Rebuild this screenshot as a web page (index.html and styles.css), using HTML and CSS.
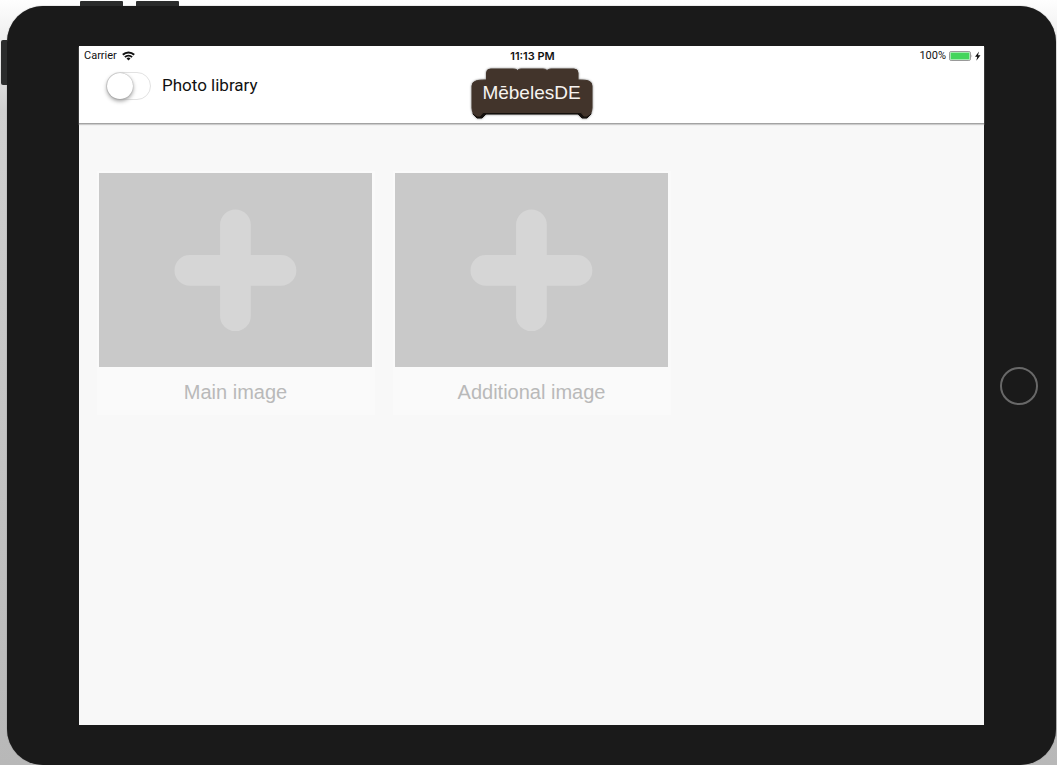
FILE: index.html
```html
<!DOCTYPE html>
<html lang="en">
<head>
<meta charset="utf-8">
<meta name="viewport" content="width=device-width, initial-scale=1">
<title>MēbelesDE</title>
<link rel="stylesheet" href="styles.css">
</head>
<body>
<div class="device">
  <span class="key key-volume-up"></span>
  <span class="key key-volume-down"></span>
  <span class="key key-power"></span>
  <div class="screen">
    <header class="header">
      <div class="status">
        <div class="status-left">
          <span>Carrier</span>
          <svg width="13" height="10" viewBox="0 0 13 10" fill="none" stroke="#111" stroke-width="2" aria-hidden="true">
            <path d="M.8 3.7a8.2 8.2 0 0 1 11.4 0"/>
            <path d="M2.9 6.1a5.2 5.2 0 0 1 7.2 0"/>
            <path d="M6.5 9.6 4.5 7.5a2.900 2.900 0 0 1 4 0Z" fill="#111" stroke="none"/>
          </svg>
        </div>
        <time class="status-time">11:13 PM</time>
        <div class="status-right">
          <span>100%</span>
          <svg width="32" height="10" viewBox="0 0 32 10" aria-hidden="true">
            <rect x=".5" y=".5" width="21" height="9" rx="1.6" fill="#fff" stroke="#999"/>
            <rect x="1.500" y="1.500" width="19" height="7" fill="#43d55b"/>
            <path d="M22.6 3.4q1.2 1.6 0 3.2Z" fill="#888"/>
            <path d="M30 .5 26 5.700h2.300l-1 4 4.200-5.500h-2.500Z" fill="#111"/>
          </svg>
        </div>
      </div>
      <div class="toolbar">
        <label class="toggle">
          <input class="toggle-input" type="checkbox" role="switch">
          <span class="toggle-text">Photo library</span>
        </label>
        <a class="logo" href="#">
          <svg class="logo-sofa" width="126" height="54" viewBox="0 0 126 54" aria-hidden="true">
            <path d="M5 44h116l1 4-4 4h-5l-4-4H17l-4 4H8l-4-4Z" fill="#15100d" stroke="#15100d" stroke-linejoin="round"/>
            <path d="M7 15q2-1 10.500-1V7q0-4 4-4h23q3 0 4 1.500Q49.500 3 52 3h22q3 0 4 1.500Q79.500 3 82 3h23q4 0 4 4v7q8.500 0 10.500 1 3.500 1 3.500 5v22q0 4-2 6l-3 2h-3l-3-3.500H14L11 50H8l-3-2q-2-2-2-6V20q0-4 4-5Z" fill="#42342b" stroke="#42342b"/>
          </svg>
          <span class="logo-text">MēbelesDE</span>
        </a>
      </div>
    </header>
    <main class="gallery">
      <button class="card" type="button">
        <span class="card-image">
          <svg class="plus" viewBox="0 0 124 124" aria-hidden="true"><path d="M62 16v92M16 62h92"/></svg>
        </span>
        <span class="card-label">Main image</span>
      </button>
      <button class="card" type="button">
        <span class="card-image">
          <svg class="plus" viewBox="0 0 124 124" aria-hidden="true"><path d="M62 16v92M16 62h92"/></svg>
        </span>
        <span class="card-label">Additional image</span>
      </button>
    </main>
  </div>
  <div class="bezel">
    <button class="home" type="button" aria-label="Home"></button>
  </div>
</div>
</body>
</html>
```
FILE: styles.css
```css
* {
  box-sizing: border-box;
}

body {
  margin: 0;
  height: 100vh;
  padding: 6px 1px 0 7px;
  overflow: hidden;
  background: linear-gradient(#fefefe, #f2f2f2 30px, #d0d0d0 110px, #b8b8b8);
  font-family: Roboto, Inter, "Liberation Sans", sans-serif;
  color: #111;
}

button {
  padding: 0;
  border: 0;
  background: none;
  font: inherit;
  cursor: pointer;
}

.device {
  position: relative;
  display: grid;
  grid-template-columns: 1fr 72px;
  height: 100%;
  padding: 40px 0 40px 72px;
  border-radius: 36px;
  background: #1a1a1a;
  box-shadow: 0 0 1px #555;
}

.key {
  position: absolute;
  background: #2b2c2c;
}

.key-volume-up,
.key-volume-down {
  top: -5px;
  width: 43px;
  height: 5px;
  border-radius: 1px 1px 0 0;
}

.key-volume-up {
  left: 73px;
}

.key-volume-down {
  left: 129px;
}

.key-power {
  top: 34px;
  left: -6px;
  width: 6px;
  height: 45px;
  border-radius: 2px 0 0 2px;
}

.screen {
  display: flex;
  flex-direction: column;
  background: #f8f8f8;
}

.header {
  border-bottom: 1px solid #a3a3a3;
  background: #fff;
  box-shadow: 0 1px 1px #ccc;
}

.status {
  display: grid;
  grid-template-columns: 1fr auto 1fr;
  align-items: center;
  height: 19px;
  padding: 0 3px 0 5px;
  font-size: 11px;
}

.status-left,
.status-right {
  display: flex;
  align-items: center;
  gap: 5px;
}

.status-right {
  justify-content: flex-end;
  gap: 3px;
}

.status-time {
  font-family: Inter, Roboto, sans-serif;
  font-weight: 600;
}

.toolbar {
  display: grid;
  grid-template-columns: 1fr auto 1fr;
  height: 58px;
  padding: 1px 27px 0;
}

.toggle {
  display: flex;
  align-items: center;
  align-self: start;
  gap: 11px;
  height: 40px;
  font-size: 17px;
}

.toggle-text {
  padding-bottom: 3px;
}

.toggle-input {
  appearance: none;
  width: 45px;
  height: 28px;
  margin: 0;
  border: 1px solid #e2e2e2;
  border-radius: 14px;
  background: #fff;
  cursor: pointer;
}

.toggle-input::before {
  content: "";
  display: block;
  width: 26px;
  height: 26px;
  border-radius: 50%;
  background: #fff;
  box-shadow: 0 0 1px #888, 0 2px 4px #999;
}

.toggle-input:checked {
  background: #43d55b;
}

.toggle-input:checked::before {
  margin-left: 17px;
}

.logo {
  display: grid;
  place-items: center;
  align-self: start;
  color: #f6f3f0;
  font-family: "Liberation Sans", Arial, sans-serif;
  font-size: 19px;
  text-decoration: none;
}

.logo > * {
  grid-area: 1 / 1;
}

.logo-sofa {
  filter: drop-shadow(0 0 1px #0008);
}

.logo-text {
  z-index: 1;
}

.gallery {
  display: grid;
  grid-template-columns: repeat(3, 1fr);
  align-items: start;
  gap: 18px;
  padding: 47px 17px 0 18px;
}

.card {
  display: flex;
  flex-direction: column;
  padding: 2px 3px 0 2px;
  background: #fafafa;
  color: #b9b9b9;
}

.card-image {
  display: grid;
  place-items: center;
  width: 100%;
  aspect-ratio: 273 / 194;
  background: #c9c9c9;
}

.plus {
  width: 45%;
  fill: none;
  stroke: #d6d6d6;
  stroke-width: 31;
  stroke-linecap: round;
}

.card-label {
  width: 100%;
  padding-top: 3px;
  font-family: "Liberation Sans", Arial, sans-serif;
  font-size: 20px;
  line-height: 45px;
  text-align: center;
}

.bezel {
  display: grid;
  place-items: center;
  padding-right: 2px;
}

.home {
  width: 38px;
  height: 38px;
  border: 2px solid #686868;
  border-radius: 50%;
}
```
